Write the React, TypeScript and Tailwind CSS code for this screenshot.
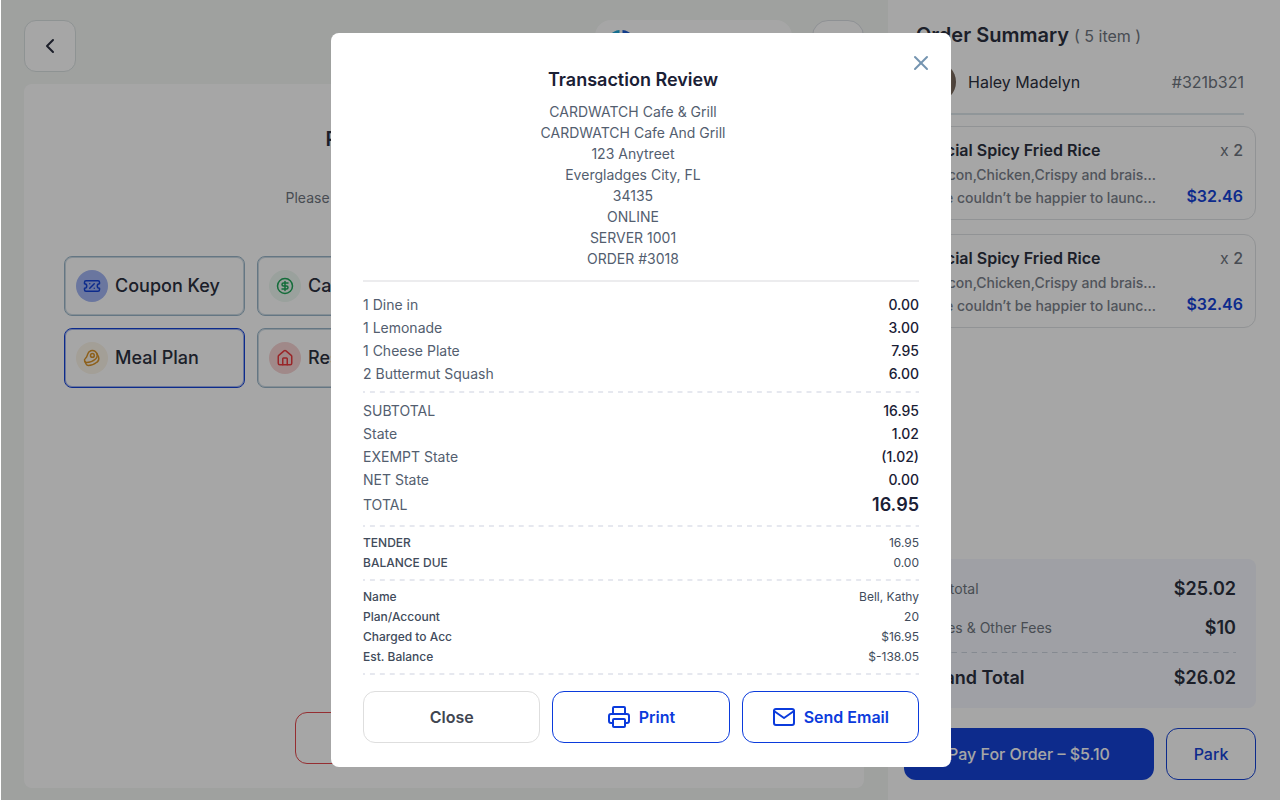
import type { ReactNode } from "react";
import { Beef, ChevronLeft, CircleDollarSign, House, Printer, TicketPercent, X } from "lucide-react";
import { FiMail } from "react-icons/fi";

type Row = [label: string, value: string];

const receiptHeader = [
  "CARDWATCH Cafe & Grill",
  "CARDWATCH Cafe And Grill",
  "123 Anytreet",
  "Evergladges City, FL",
  "34135",
  "ONLINE",
  "SERVER 1001",
  "ORDER #3018",
];
const items: Row[] = [
  ["1 Dine in", "0.00"],
  ["1 Lemonade", "3.00"],
  ["1 Cheese Plate", "7.95"],
  ["2 Buttermut Squash", "6.00"],
];
const totals: Row[] = [
  ["SUBTOTAL", "16.95"],
  ["State", "1.02"],
  ["EXEMPT State", "(1.02)"],
  ["NET State", "0.00"],
];
const tender: Row[] = [
  ["TENDER", "16.95"],
  ["BALANCE DUE", "0.00"],
];
const account: Row[] = [
  ["Name", "Bell, Kathy"],
  ["Plan/Account", "20"],
  ["Charged to Acc", "$16.95"],
  ["Est. Balance", "$-138.05"],
];

function Dashes() {
  return (
    <div className="my-1.5 h-0.5 bg-[linear-gradient(90deg,#e6e8ef_0_25%,transparent_25%_75%,#e6e8ef_75%)] bg-[length:10px_2px] bg-repeat-round" />
  );
}

function Rows({ rows }: { rows: Row[] }) {
  return (
    <dl className="text-sm leading-[23px]">
      {rows.map(([label, value]) => (
        <div key={label} className="flex justify-between">
          <dt className="text-[#535e6f]">{label}</dt>
          <dd className="font-medium text-[#1a2035]">{value}</dd>
        </div>
      ))}
    </dl>
  );
}

function SmallRows({ rows }: { rows: Row[] }) {
  return (
    <dl className="text-xs leading-5 text-[#414b5b]">
      {rows.map(([label, value]) => (
        <div key={label} className="flex justify-between">
          <dt className="font-medium">{label}</dt>
          <dd>{value}</dd>
        </div>
      ))}
    </dl>
  );
}

function PaymentOption({ label, icon, tint, active }: { label: string; icon: ReactNode; tint: string; active?: boolean }) {
  return (
    <button
      type="button"
      className={`flex h-15 items-center gap-[7px] rounded-lg border px-[11px] text-lg font-medium text-[#2b3040] ${active ? "border-[#1543d8] ring-1 ring-[#1543d8]/40 ring-inset" : "border-[#9ab6c9] ring-1 ring-[#9ab6c9]/50 ring-inset"}`}
    >
      <span className={`flex size-8 shrink-0 items-center justify-center rounded-full ${tint}`}>{icon}</span>
      <span className="truncate">{label}</span>
    </button>
  );
}

function OrderCard() {
  return (
    <li className="flex h-[94px] justify-between rounded-xl border border-[#dfe2e5] pt-[11px] pr-3 pl-[11px]">
      <div className="w-60">
        <h3 className="text-base leading-6 font-semibold text-[#2b3040]">Special Spicy Fried Rice</h3>
        <p className="mt-px text-right text-sm leading-[23px] font-medium whitespace-nowrap text-[#7b828c]">
          Bacon,Chicken,Crispy and brais...
          <br />
          We couldn’t be happier to launc...
        </p>
      </div>
      <div className="flex flex-col items-end text-base leading-6">
        <span className="text-[#6f7680]">
          x <span className="font-medium">2</span>
        </span>
        <span className="mt-[22px] font-semibold text-[#1543d8]">$32.46</span>
      </div>
    </li>
  );
}

function OrderPage() {
  return (
    <div className="flex min-h-screen bg-white pl-px">
      <main className="flex flex-1 flex-col gap-3 bg-[#f4f7f5] pt-5 pr-6 pb-3 pl-[23px]">
        <header className="flex items-center gap-5">
          <button
            type="button"
            aria-label="Back"
            className="flex size-[52px] items-center justify-center rounded-xl border border-[#dbe2e2] bg-white text-[#2b3040]"
          >
            <ChevronLeft size={24} strokeWidth={2} />
          </button>
          <div className="ml-auto flex h-[52px] w-[197px] items-center rounded-2xl bg-white px-2.5">
            <svg viewBox="0 0 32 32" className="size-8" aria-hidden="true">
              <path d="M14.500 0.100A16 16 0 0 0 14.500 31.900V22A6 6 0 0 1 14.500 10Z" fill="#21a9dc" />
              <path d="M17.500 0.100A16 16 0 0 1 17.500 31.900V22A6 6 0 0 0 17.500 10Z" fill="#1c5fd6" />
            </svg>
          </div>
          <button type="button" aria-label="Menu" className="size-[52px] rounded-2xl border border-[#dbdfe4] bg-white" />
        </header>
        <section className="flex flex-1 flex-col rounded-lg bg-white px-10 pt-10 pb-6">
          <h1 className="text-center text-xl leading-[30px] font-semibold text-[#2b3040]">Payment Method Choice</h1>
          <p className="mt-[33px] text-center text-sm leading-[22px] text-[#6f7680]">
            Please select one of the payment options below
          </p>
          <div className="mt-[47px] grid grid-cols-4 gap-3">
            <PaymentOption
              label="Coupon Key"
              tint="bg-[#a3b6f4]"
              icon={<TicketPercent size={18} className="text-[#1543d8]" />}
            />
            <PaymentOption
              label="Cash"
              tint="bg-[#edf8f1]"
              icon={<CircleDollarSign size={18} className="text-[#1fa75a]" />}
            />
            <PaymentOption label="Gift Card" tint="bg-[#f1ecfb]" icon={null} />
            <PaymentOption label="Credit" tint="bg-[#e8f3fb]" icon={null} />
            <PaymentOption
              label="Meal Plan"
              active
              tint="bg-[#fbf4e8]"
              icon={<Beef size={18} className="text-[#d9942a]" />}
            />
            <PaymentOption
              label="Residence"
              tint="bg-[#f6d3d3]"
              icon={<House size={18} className="text-[#ec3b3f]" />}
            />
          </div>
          <button
            type="button"
            className="mx-auto mt-auto h-[52px] w-[298px] rounded-xl border border-[#e5484d] text-base font-medium text-[#e5484d]"
          >
            Cancel
          </button>
        </section>
      </main>

      <aside className="flex w-[392px] shrink-0 flex-col px-6 pt-5 pb-5 pl-4 text-[#2b3040]">
        <div className="px-3">
          <h2 className="text-xl leading-[30px] font-semibold">
            Order Summary <span className="text-base font-normal text-[#6f7680]">( 5 item )</span>
          </h2>
          <div className="mt-3 flex items-center gap-3 border-b-2 border-[#dde6ec] pb-[11px] text-base">
            <span className="size-10 rounded-full bg-[linear-gradient(90deg,#c9b8a4,#8d7b6c_80%,#6f5f55)]" />
            <span>Haley Madelyn</span>
            <span className="ml-auto text-[#6f7680]">#321b321</span>
          </div>
        </div>
        <ul className="mt-[11px] flex flex-col gap-3.5">
          <OrderCard />
          <OrderCard />
        </ul>
        <dl className="mt-auto rounded-lg bg-[#f4f6fd] px-5 pt-4 pb-[15px]">
          <div className="flex items-center justify-between leading-7">
            <dt className="text-sm text-[#6f7680]">Subtotal</dt>
            <dd className="text-lg font-semibold">$25.02</dd>
          </div>
          <div className="mt-[11px] flex items-center justify-between leading-7">
            <dt className="text-sm text-[#6f7680]">Taxes &amp; Other Fees</dt>
            <dd className="text-lg font-semibold">$10</dd>
          </div>
          <div
            role="presentation"
            className="my-2.5 h-px bg-[linear-gradient(90deg,#cdd4df_0_25%,transparent_25%_75%,#cdd4df_75%)] bg-[length:10px_1px] bg-repeat-round"
          />
          <div className="flex items-center justify-between text-lg leading-[30px] font-semibold">
            <dt>Grand Total</dt>
            <dd>$26.02</dd>
          </div>
        </dl>
        <div className="mt-5 flex gap-3 text-base font-medium">
          <button type="button" className="h-[52px] flex-1 rounded-xl bg-[#1543d8] text-white">
            Pay For Order – $5.10
          </button>
          <button type="button" className="h-[52px] w-[90px] rounded-xl border border-[#1543d8] text-[#1543d8]">
            Park
          </button>
        </div>
      </aside>
    </div>
  );
}

export default function App() {
  const actionClass = "flex h-[52px] items-center justify-center gap-2 rounded-xl border";
  return (
    <div className="font-['Inter',sans-serif]">
      <OrderPage />
      <div className="fixed inset-y-0 -right-px left-px flex items-center justify-center bg-black/35">
        <div
          role="dialog"
          aria-modal="true"
          aria-labelledby="review-title"
          className="relative w-[620px] rounded-lg bg-white px-8 pt-8 pb-6"
        >
          <button type="button" aria-label="Close dialog" className="absolute top-[18px] right-[18px] text-[#7494b0]">
            <X size={24} strokeWidth={2} />
          </button>
          <h2 id="review-title" className="pr-4 text-center text-lg leading-[30px] font-semibold text-[#1a2035]">
            Transaction Review
          </h2>
          <div className="mt-1.5 border-b-2 border-[#ececee] pr-4 pb-[11px] text-center text-sm leading-[21px] text-[#535e6f]">
            {receiptHeader.map((line) => (
              <p key={line}>{line}</p>
            ))}
          </div>
          <div className="pt-[11px]">
            <Rows rows={items} />
          </div>
          <Dashes />
          <Rows rows={totals} />
          <div className="flex items-center justify-between leading-7">
            <span className="text-sm leading-7 text-[#535e6f]">TOTAL</span>
            <span className="text-lg leading-7 font-semibold text-[#1a2035]">16.95</span>
          </div>
          <Dashes />
          <SmallRows rows={tender} />
          <Dashes />
          <SmallRows rows={account} />
          <Dashes />
          <div className="mt-4 grid grid-cols-3 gap-3 text-base font-semibold">
            <button type="button" className={`${actionClass} border-[#dedede] text-[#414651]`}>
              Close
            </button>
            <button type="button" className={`${actionClass} border-[#0b3bdc] text-[#0b3bdc]`}>
              <Printer size={24} />
              Print
            </button>
            <button type="button" className={`${actionClass} border-[#0b3bdc] text-[#0b3bdc]`}>
              <FiMail size={24} />
              Send Email
            </button>
          </div>
        </div>
      </div>
    </div>
  );
}
